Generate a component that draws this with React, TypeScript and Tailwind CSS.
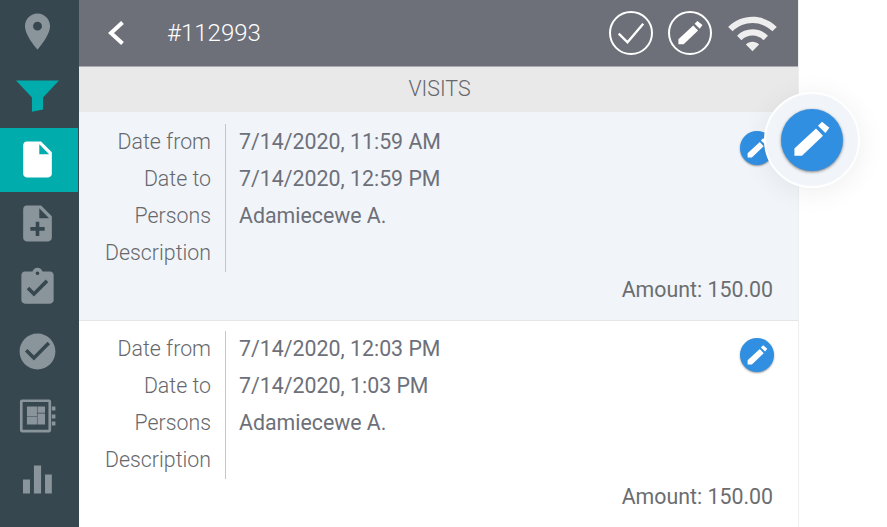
const PENCIL = 'M3.2 16.2 14 6.2l3.5 3.7L7 19.9H3.2zM15 4.9l2-2 3.7 3-2 2.6z'

const NAV_ICONS = [
  { key: 'place', d: 'M12 2C8.13 2 5 5.13 5 9c0 5.25 7 13 7 13s7-7.75 7-13c0-3.87-3.13-7-7-7zm0 9.5a2.5 2.5 0 0 1 0-5 2.5 2.5 0 0 1 0 5z' },
  { key: 'filter', d: 'M0 3.6h24l-8.9 9.5v6.7l-6.2 1.2v-7.9z', color: 'text-[#00acac]' },
  { key: 'file', d: 'M6 2c-1.1 0-1.99.9-1.99 2L4 20c0 1.1.89 2 1.99 2H18c1.1 0 2-.9 2-2V8l-6-6H6zm7 7V3.5L18.5 9H13z', active: true },
  { key: 'add', d: 'M14 2H6c-1.1 0-1.99.9-1.99 2L4 20c0 1.1.89 2 1.99 2H18c1.1 0 2-.9 2-2V8l-6-6zm2 14h-3v3h-2v-3H8v-2h3v-3h2v3h3v2zm-3-7V3.5L18.5 9H13z' },
  { key: 'task', d: 'M19 3h-4.18C14.4 1.84 13.3 1 12 1c-1.3 0-2.4.84-2.82 2H5c-1.1 0-2 .9-2 2v14c0 1.1.9 2 2 2h14c1.1 0 2-.9 2-2V5c0-1.1-.9-2-2-2zm-7 0c.55 0 1 .45 1 1s-.45 1-1 1-1-.45-1-1 .45-1 1-1zm-2 14l-4-4 1.41-1.41L10 14.17l6.59-6.59L18 9l-8 8z' },
  { key: 'done', d: 'M12 2C6.48 2 2 6.48 2 12s4.48 10 10 10 10-4.48 10-10S17.52 2 12 2zm-2 15l-5-5 1.41-1.41L10 14.17l7.59-7.59L19 8l-9 9z' },
  { key: 'book', d: 'M3.4 3h15c.7 0 1.2.5 1.2 1.2v16.1c0 .7-.5 1.2-1.2 1.2h-15c-.7 0-1.2-.5-1.2-1.2V4.2C2.2 3.5 2.7 3 3.4 3zm.3 1.5v15.5h14.4V4.5H3.7zM6.1 7h5.6v5.3H6.1zm5.9 0h4.2v3.4H12zM6.1 12.6h5.6V17H6.1zm5.9-1.7h4.2V17H12zM20 7h2v2.2h-2zm0 4.5h2v2.2h-2zm0 3.9h2v2.2h-2z' },
  { key: 'bars', d: 'M3.9 12h3.9v7.8H3.9zM10 4.2h4v15.6h-4zM16.2 9.2H20v10.6h-3.8z' },
]

const VISITS = [
  { from: '7/14/2020, 11:59 AM', to: '7/14/2020, 12:59 PM', persons: 'Adamiecewe A.', amount: '150.00', selected: true },
  { from: '7/14/2020, 12:03 PM', to: '7/14/2020, 1:03 PM', persons: 'Adamiecewe A.', amount: '150.00', selected: false },
]

function Icon({ d, className }: { d: string; className?: string }) {
  return (
    <svg viewBox="0 0 24 24" className={className} fill="currentColor">
      <path d={d} />
    </svg>
  )
}

function Sidebar() {
  return (
    <aside className="w-[79px] shrink-0 bg-[#37474f]">
      {NAV_ICONS.map((item) => (
        <div
          key={item.key}
          className={`flex h-16 w-[78px] items-center justify-center pb-[2px] pr-[3px] ${item.active ? 'bg-[#00acac] text-white' : item.color ?? 'text-[#8a949b]'}`}
        >
          <Icon d={item.d} className="h-[43px] w-[43px]" />
        </div>
      ))}
    </aside>
  )
}

function Header() {
  return (
    <header className="flex h-[67px] items-center border-b border-[#a9abb0] bg-[#6d7079] text-white">
      <svg viewBox="0 0 16 24" className="ml-[29px] h-6 w-4" fill="none" stroke="currentColor" strokeWidth="4">
        <path d="M14.5 1.5 3 12l11.5 10.5" />
      </svg>
      <span className="ml-[43px] text-2xl font-light">#112993</span>
      <div className="ml-auto flex items-center">
        <div className="flex h-[44px] w-[44px] items-center justify-center rounded-full border-2 border-white">
          <svg viewBox="0 0 24 24" className="h-7 w-7" fill="none" stroke="currentColor" strokeWidth="2">
            <path d="M1.5 12.5 9 20 22.5 4" />
          </svg>
        </div>
        <div className="ml-[15px] flex h-[44px] w-[44px] items-center justify-center rounded-full border-2 border-white">
          <Icon d={PENCIL} className="h-[33px] w-[33px]" />
        </div>
        <svg viewBox="0 0 24 24" className="ml-[14px] mr-[19px] h-[53px] w-[53px] text-[#eeeeee]" fill="currentColor">
          <path d="M1 9l2 2c4.97-4.97 13.03-4.97 18 0l2-2C16.93 2.93 7.08 2.93 1 9zm8 8l3 3 3-3c-1.65-1.66-4.34-1.66-6 0zm-4-4l2 2c2.76-2.76 7.24-2.76 10 0l2-2C15.14 9.14 8.87 9.14 5 13z" />
        </svg>
      </div>
    </header>
  )
}

function VisitItem({ visit }: { visit: (typeof VISITS)[number] }) {
  const rows = [
    ['Date from', visit.from],
    ['Date to', visit.to],
    ['Persons', visit.persons],
    ['Description', ''],
  ]
  return (
    <div className={`border-b border-[#e4e6e8] pb-[11px] pl-[25px] pr-[25px] ${visit.selected ? 'bg-[#f1f5f9] pt-3' : 'bg-white pt-[10px]'}`}>
      <div className="flex">
        <div className="w-[122px] border-r border-[#c4c7ca] pr-[14px] text-right font-light text-[#66686c]">
          {rows.map(([label]) => (
            <div key={label} className="h-[37px] leading-[35px]">{label}</div>
          ))}
        </div>
        <div className="ml-[13px] flex-1 text-[#6d7079]">
          {rows.map(([label, value]) => (
            <div key={label} className="h-[37px] leading-[35px]">{value}</div>
          ))}
        </div>
        <button className="-mr-px mt-[7px] flex h-[34px] w-[34px] items-center justify-center rounded-full bg-[#318fe2] text-white shadow-[0_1px_2px_rgba(0,0,0,0.4)]">
          <Icon d={PENCIL} className="h-[27px] w-[27px]" />
        </button>
      </div>
      <div className="h-[37px] text-right leading-[35px] text-[#6b6d70]">Amount: {visit.amount}</div>
    </div>
  )
}

export default function App() {
  return (
    <div className="relative flex h-[527px] w-[887px] overflow-hidden bg-white text-[21.33px] [font-family:Roboto,sans-serif]">
      <Sidebar />
      <main className="w-[720px] shrink-0 border-r border-[#eceef0]">
        <Header />
        <div className="h-[45px] bg-[#e9e9e9] pl-[2px] text-center font-light leading-[43px] text-[#66686c]">VISITS</div>
        {VISITS.map((visit) => (
          <VisitItem key={visit.from} visit={visit} />
        ))}
      </main>
      {/* highlighted edit button */}
      <div className="absolute left-[764px] top-[92px] flex h-24 w-24 items-center justify-center rounded-full border-2 border-white bg-[#f1f5f9] shadow-[0_4px_28px_rgba(0,0,0,0.07)]">
        <div className="flex h-[62px] w-[62px] items-center justify-center rounded-full bg-[#318fe2] text-white shadow-[0_1px_3px_rgba(0,0,0,0.5)]">
          <Icon d={PENCIL} className="h-12 w-12" />
        </div>
      </div>
    </div>
  )
}
